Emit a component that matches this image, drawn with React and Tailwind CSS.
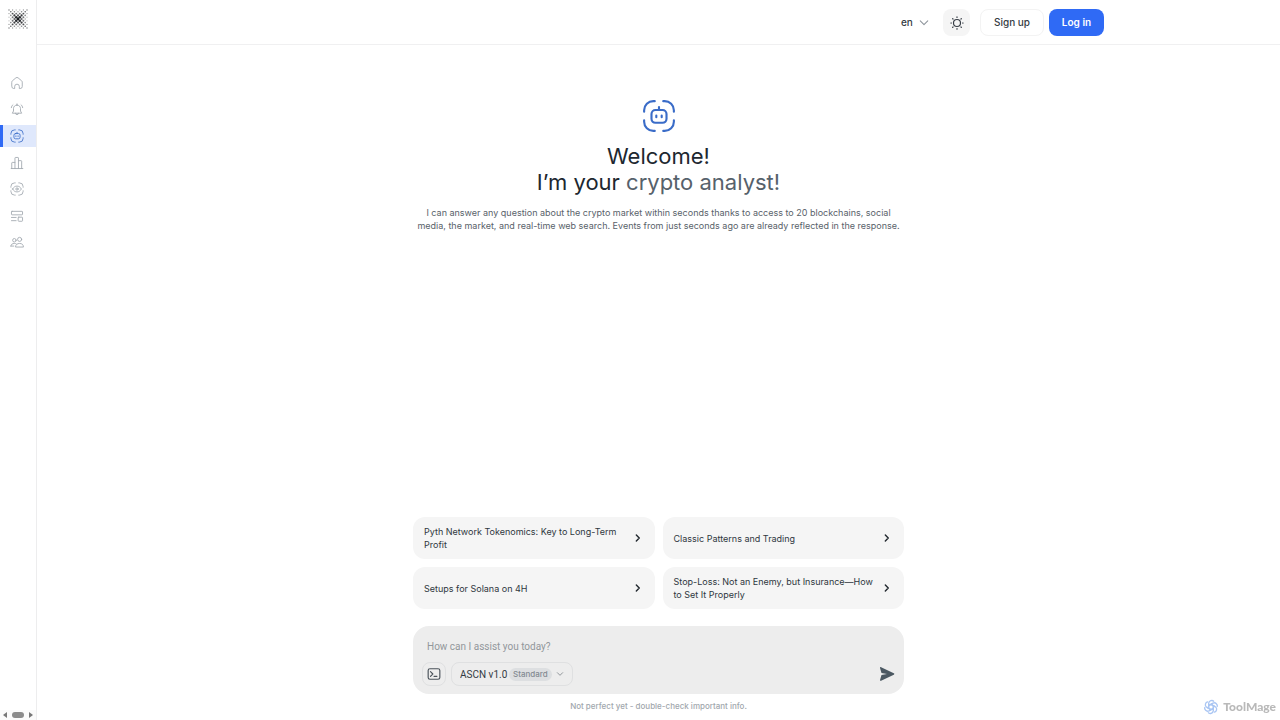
import { useState } from "react";

const PROMPTS = [
  "Pyth Network Tokenomics: Key to Long-Term Profit",
  "Classic Patterns and Trading",
  "Setups for Solana on 4H",
  "Stop-Loss: Not an Enemy, but Insurance—How to Set It Properly",
];

// dots shrink and fade away from the centre, and crowd round the two diagonals
const LOGO_DOTS = [];
for (let y = -5; y <= 5; y++) {
  for (let x = -5; x <= 5; x++) {
    if ((x + y) % 2 !== 0) continue;
    const off = Math.min(Math.abs(x - y), Math.abs(x + y));
    const far = Math.max(Math.abs(x), Math.abs(y));
    if (off > 2 && far < 4) continue;
    if (off > 4) continue;
    LOGO_DOTS.push({
      x: 10 + x * 1.8,
      y: 10 + y * 1.8,
      r: Math.max(0.5, 1.4 - far * 0.15),
      o: Math.max(0.3, 1 - far * 0.08 - off * 0.08),
    });
  }
}

function Logo() {
  return (
    <svg viewBox="0 0 20 20" className="size-5" fill="#15181c" aria-hidden="true">
      {LOGO_DOTS.map((d) => (
        <circle key={`${d.x}-${d.y}`} cx={d.x} cy={d.y} r={d.r} opacity={d.o} />
      ))}
    </svg>
  );
}

function Icon({ children, className = "size-3.5", width = 1.5 }) {
  return (
    <svg
      viewBox="0 0 24 24"
      className={`shrink-0 ${className}`}
      fill="none"
      stroke="currentColor"
      strokeWidth={width}
      strokeLinecap="round"
      strokeLinejoin="round"
      aria-hidden="true"
    >
      {children}
    </svg>
  );
}

const corners = <path d="M9 1.5H8A6.5 6.5 0 0 0 1.5 8v1M15 1.5h1A6.5 6.5 0 0 1 22.5 8v1M22.5 15v1a6.5 6.5 0 0 1-6.5 6.5h-1M9 22.5H8A6.5 6.5 0 0 1 1.5 16v-1" />;

const robot = (
  <>
    {corners}
    <rect x="6.7" y="7.8" width="10.6" height="9" rx="2.8" />
    <path d="M12 7.8V5.7M10.1 11.7v1.2M13.9 11.7v1.2" />
  </>
);

const NAV = [
  {
    label: "Home",
    icon: <path d="M3 10.500a3 3 0 0 1 1.100-2.300l6-5a3 3 0 0 1 3.800 0l6 5a3 3 0 0 1 1.100 2.300V18a3.500 3.500 0 0 1-3.500 3.500H16V18a4 4 0 0 0-8 0v3.500H6.500A3.500 3.500 0 0 1 3 18z" />,
  },
  {
    label: "Alerts",
    icon: (
      <>
        <path d="M12 3.500c-3.600 0-6 2.700-6 6v4.200l-2 3.800h16l-2-3.800V9.500c0-3.300-2.400-6-6-6zM12 3.500v-2M9.500 17.500a2.500 2.500 0 0 0 5 0" />
        <path d="M5 3C3.500 4.200 2.500 6 2.300 8M19 3c1.500 1.200 2.500 3 2.700 5" />
      </>
    ),
  },
  { label: "AI analyst", icon: robot, active: true },
  {
    label: "Markets",
    icon: <path d="M2 21.500h20M3 21.500V12a1 1 0 0 1 1-1h4.500M8.500 21.500v-18a1 1 0 0 1 1-1h4a1 1 0 0 1 1 1v18M14.500 8H19a1 1 0 0 1 1 1v12.500" />,
  },
  {
    label: "Watch",
    icon: (
      <>
        {corners}
        <path d="M4.500 12c1.800-3.300 4.300-5 7.500-5s5.700 1.700 7.500 5c-1.800 3.300-4.300 5-7.500 5s-5.700-1.700-7.500-5z" />
        <circle cx="12" cy="12" r="2" />
      </>
    ),
  },
  {
    label: "Dashboards",
    icon: (
      <>
        <rect x="2.500" y="4" width="19" height="6" rx="1" />
        <rect x="14" y="14" width="7.500" height="7" rx="1" />
        <path d="M2.500 14.500h8M2.500 20h8" />
      </>
    ),
  },
  {
    label: "Community",
    icon: (
      <>
        <circle cx="7.500" cy="9" r="3" />
        <circle cx="16.500" cy="7.500" r="3.500" />
        <path d="M1.500 19c0-3 2.500-4.500 6-4.500 1.300 0 2.300.2 3.200.7M9.500 20c0-3.500 3-5.500 7-5.500s6.500 2 6.500 5.500zM1.500 19h5" />
      </>
    ),
  },
];

function Sidebar() {
  return (
    <aside className="flex w-[37px] shrink-0 flex-col justify-between border-r border-[#ededee]">
      <div>
        <a href="/" aria-label="ASCN" className="flex justify-center pt-[9px]">
          <Logo />
        </a>
        <nav className="mt-[43px] flex h-[181px] flex-col justify-between">
          {NAV.map((item) => (
            <a
              key={item.label}
              href="#"
              aria-label={item.label}
              className={
                item.active
                  ? "flex h-[22px] items-center justify-center border-l-3 border-[#2f6af5] bg-[#dfe8fc] pr-[5px] text-[#4373cb]"
                  : "flex h-[22px] items-center justify-center pr-0.5 text-[#a2a9b0]"
              }
            >
              <Icon>{item.icon}</Icon>
            </a>
          ))}
        </nav>
      </div>
      <div className="flex h-[10px] items-center justify-between bg-[#fafafa] px-[3px]">
        <svg viewBox="0 0 4 6" className="h-1.5 w-1" fill="#777"><path d="M4 0v6L0 3z" /></svg>
        <span className="h-1.5 w-3 rounded-full bg-[#8b8b8b]" />
        <svg viewBox="0 0 4 6" className="h-1.5 w-1" fill="#777"><path d="M0 0v6l4-3z" /></svg>
      </div>
    </aside>
  );
}

function Header() {
  return (
    <header className="border-b border-[#f0f0f1]">
      <div className="mx-auto flex h-11 max-w-[891px] items-center justify-end pt-px text-[10px] font-medium text-[#343b43]">
        <label className="mr-3.5 flex items-center gap-1.5">
          <select aria-label="Language" className="appearance-none outline-none" defaultValue="en">
            <option value="en">en</option>
          </select>
          <Icon className="size-2.5 text-[#8d949b]" width={2.5}>
            <path d="m3 7 9 9 9-9" />
          </Icon>
        </label>
        <button type="button" aria-label="Theme" className="mr-2.5 flex size-[27px] items-center justify-center rounded-lg bg-[#f5f5f5]">
          <Icon className="size-3.5" width={2}>
            <circle cx="12" cy="12" r="6" />
            <path d="M12 1.500v1M12 21.500v1M1.500 12h1M21.500 12h1M4.500 4.500l.7.7M18.800 18.800l.7.7M4.500 19.500l.7-.7M18.800 5.200l.7-.7" />
          </Icon>
        </button>
        <button type="button" className="mr-[5px] h-[27px] w-16 rounded-lg border border-[#f3f3f3]">Sign up</button>
        <button type="button" className="h-[27px] w-[55px] rounded-lg bg-[#2f6af5] font-semibold text-white">Log in</button>
      </div>
    </header>
  );
}

function Composer() {
  const [text, setText] = useState("");

  return (
    <form
      className="mt-[17px] flex flex-col rounded-2xl bg-[#ededed] pt-3.5 pr-[9px] pb-2 pl-[9px]"
      onSubmit={(e) => e.preventDefault()}
    >
      <textarea
        rows={1}
        value={text}
        onChange={(e) => setText(e.target.value)}
        aria-label="Message"
        placeholder="How can I assist you today?"
        className="h-[22px] resize-none px-[5px] font-[Roboto,sans-serif] text-[10px] leading-[14px] text-[#343b43] outline-none placeholder:text-[#92979b]"
      />
      <div className="flex items-center">
        <button type="button" aria-label="Commands" className="mr-[5px] flex size-6 items-center justify-center rounded-lg border border-[#dfe0e1] text-[#4b535b]">
          <Icon width={2}>
            <rect x="2" y="3" width="20" height="18" rx="3" />
            <path d="m6 8 4 4-4 4M12 16h5" />
          </Icon>
        </button>
        <label className="flex h-6 items-center rounded-lg border border-[#dfe0e1] px-2 font-[Roboto,sans-serif] text-[10px] text-[#343b43]">
          <select aria-label="Model" className="appearance-none outline-none" defaultValue="1">
            <option value="1">ASCN v1.0</option>
          </select>
          <span className="ml-px rounded-full bg-[#dddfe1] px-1 font-[Inter,sans-serif] text-[8px] leading-[13px] font-medium text-[#838a91]">Standard</span>
          <Icon className="ml-1 size-2 text-[#92979b]" width={3}>
            <path d="m4 8 8 8 8-8" />
          </Icon>
        </label>
        <button type="submit" aria-label="Send" className="ml-auto text-[#4b5862]">
          <svg viewBox="0 0 16 16" className="size-4" fill="currentColor" aria-hidden="true">
            <path d="M1.100 2.200c-.2-.8.300-1.300 1-1L14.800 7.300c.7.300.7 1.100 0 1.400L2.100 14.800c-.7.300-1.200-.2-1-1l1.400-4.700L8 8 2.500 6.900z" />
          </svg>
        </button>
      </div>
    </form>
  );
}

function Watermark() {
  return (
    <div className="fixed right-1 bottom-1 flex items-center gap-1 font-[Lato,sans-serif] text-[12px] leading-[18px] font-black text-[#b9b9b9]">
      <svg viewBox="0 0 24 24" className="size-4" fill="none" stroke="#aac6f3" strokeWidth="2" aria-hidden="true">
        {[0, 60, 120, 180, 240, 300].map((a) => (
          <path key={a} transform={`rotate(${a} 12 12)`} d="M8.500 14V6.500A4.500 4.500 0 0 1 16.500 4M8.500 10l6-3.500" />
        ))}
      </svg>
      ToolMage
    </div>
  );
}

export default function App() {
  return (
    <div className="flex min-h-screen bg-white font-[Inter,sans-serif]">
      <Sidebar />
      <div className="flex min-w-0 flex-1 flex-col">
        <Header />
        <main className="mx-auto flex w-full max-w-[491px] flex-1 flex-col pb-2">
          <section className="flex flex-col items-center pt-[54px] text-center">
            <Icon className="size-[34px] text-[#3a6cc8]">{robot}</Icon>
            <h1 className="mt-2.5 text-[22px] leading-[26px] text-[#20272f]">
              Welcome!
              <br />
              I’m your <span className="text-[#56616b]">crypto analyst!</span>
            </h1>
            <p className="mt-[11px] text-[9px] leading-[13px] text-[#59626a]">
              I can answer any question about the crypto market within seconds thanks to access to 20 blockchains, social
              media, the market, and real-time web search. Events from just seconds ago are already reflected in the response.
            </p>
          </section>
          <div className="mt-auto grid grid-cols-2 gap-2">
            {PROMPTS.map((prompt) => (
              <button
                key={prompt}
                type="button"
                className="flex h-[42px] items-center justify-between gap-2 rounded-xl bg-[#f5f5f5] pr-3 pl-[11px] text-left text-[9px] leading-[13px] text-[#2f373e]"
              >
                {prompt}
                <Icon className="size-2.5 text-[#23292f]" width={3.5}>
                  <path d="m8 5 7 7-7 7" />
                </Icon>
              </button>
            ))}
          </div>
          <Composer />
          <p className="mt-1.5 text-center text-[8px] leading-3 font-medium text-[#a1a7ad]">
            Not perfect yet - double-check important info.
          </p>
        </main>
      </div>
      <Watermark />
    </div>
  );
}
